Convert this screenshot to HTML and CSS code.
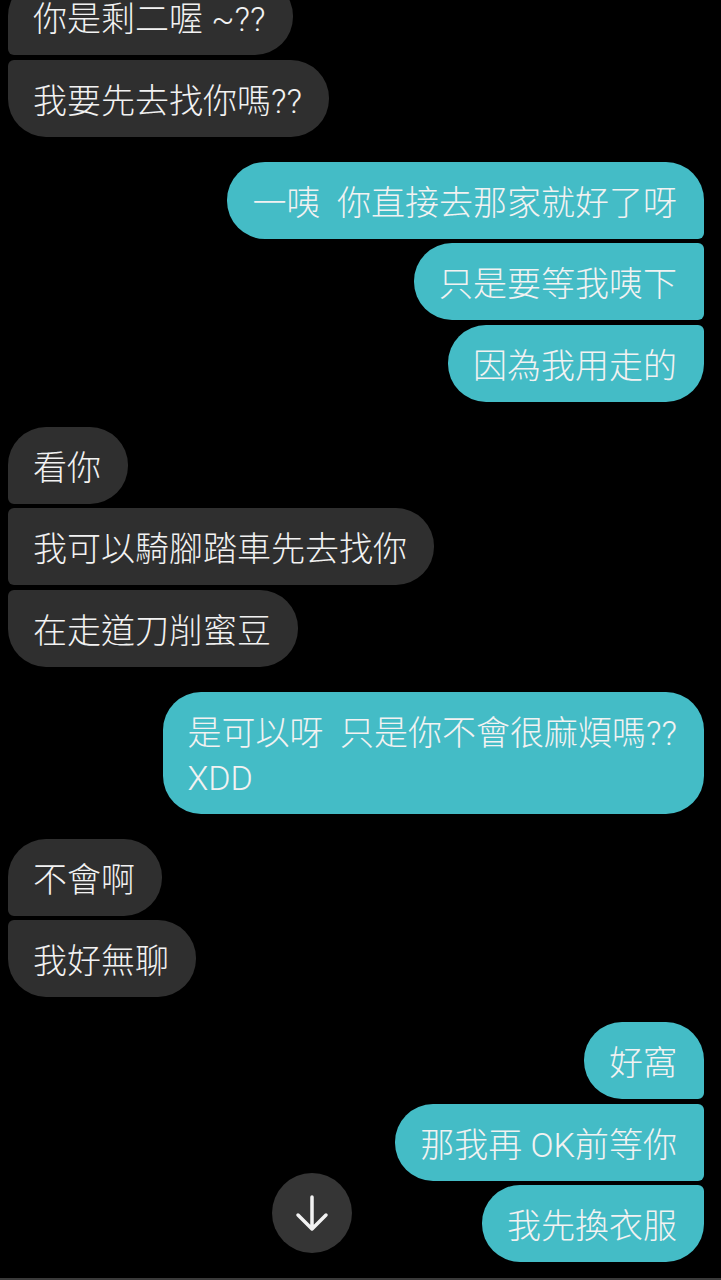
FILE: index.html
```html
<!DOCTYPE html>
<html lang="zh-Hant">
<head>
    <meta charset="UTF-8">
    <meta name="viewport" content="width=device-width, initial-scale=1.0">
    <title>聊天</title>
    <link rel="stylesheet" href="styles.css">
</head>
<body>
    <div class="screen">
        <div class="chat">
            <div class="group in">
                <div class="bubble">你是剩二喔 ~??</div>
                <div class="bubble">我要先去找你嗎??</div>
            </div>

            <div class="group out">
                <div class="bubble">一咦&nbsp;&nbsp;你直接去那家就好了呀</div>
                <div class="bubble">只是要等我咦下</div>
                <div class="bubble">因為我用走的</div>
            </div>

            <div class="group in">
                <div class="bubble">看你</div>
                <div class="bubble">我可以騎腳踏車先去找你</div>
                <div class="bubble">在走道刀削蜜豆</div>
            </div>

            <div class="group out">
                <div class="bubble">是可以呀&nbsp;&nbsp;只是你不會很麻煩嗎??<br>XDD</div>
            </div>

            <div class="group in">
                <div class="bubble">不會啊</div>
                <div class="bubble">我好無聊</div>
            </div>

            <div class="group out">
                <div class="bubble">好窩</div>
                <div class="bubble">那我再 OK前等你</div>
                <div class="bubble">我先換衣服</div>
            </div>
        </div>

        <!-- 捲到最新訊息 -->
        <button class="scroll-down" type="button" aria-label="捲到底部">
            <svg width="80" height="80" viewBox="0 0 80 80">
                <path d="M40 24 V56 M26 42 L40 56 L54 42" fill="none" stroke="#f2f2f2" stroke-width="3.5" stroke-linecap="round" stroke-linejoin="round"/>
            </svg>
        </button>
    </div>
</body>
</html>
```

FILE: styles.css
```css
html, body {
    margin: 0;
    padding: 0;
    background-color: #000;
}
.screen {
    position: relative;
    height: 1280px;
    overflow: hidden;
    box-sizing: border-box;
    border-bottom: 2px solid #3a3a3a;
    font-family: Roboto, "Noto Sans CJK TC", sans-serif;
}
.chat {
    display: flex;
    flex-direction: column;
    gap: 25px;
    margin-top: -22px;
    padding: 0 17px 0 8px;
}
.group {
    display: flex;
    flex-direction: column;
    gap: 4.5px;
}
.group.in {
    align-items: flex-start;
}
.group.out {
    align-items: flex-end;
}
.bubble {
    padding: 19px 27px 13px 25px;
    font-size: 34px;
    font-weight: 300;
    line-height: 45px;
    color: #f2f2f2;
    border-radius: 38px;
    white-space: nowrap;
}
.in .bubble {
    background-color: #2f2f2f;
}
.out .bubble {
    background-color: #44bcc6;
}
.in .bubble:not(:first-child) {
    border-top-left-radius: 6px;
}
.in .bubble:not(:last-child) {
    border-bottom-left-radius: 6px;
}
.out .bubble:not(:first-child) {
    border-top-right-radius: 6px;
}
.out .bubble:not(:last-child) {
    border-bottom-right-radius: 6px;
}
.scroll-down {
    position: absolute;
    left: 272px;
    top: 1173px;
    width: 80px;
    height: 80px;
    padding: 0;
    border: none;
    border-radius: 50%;
    background-color: #353535;
}
.scroll-down svg {
    display: block;
}
```
